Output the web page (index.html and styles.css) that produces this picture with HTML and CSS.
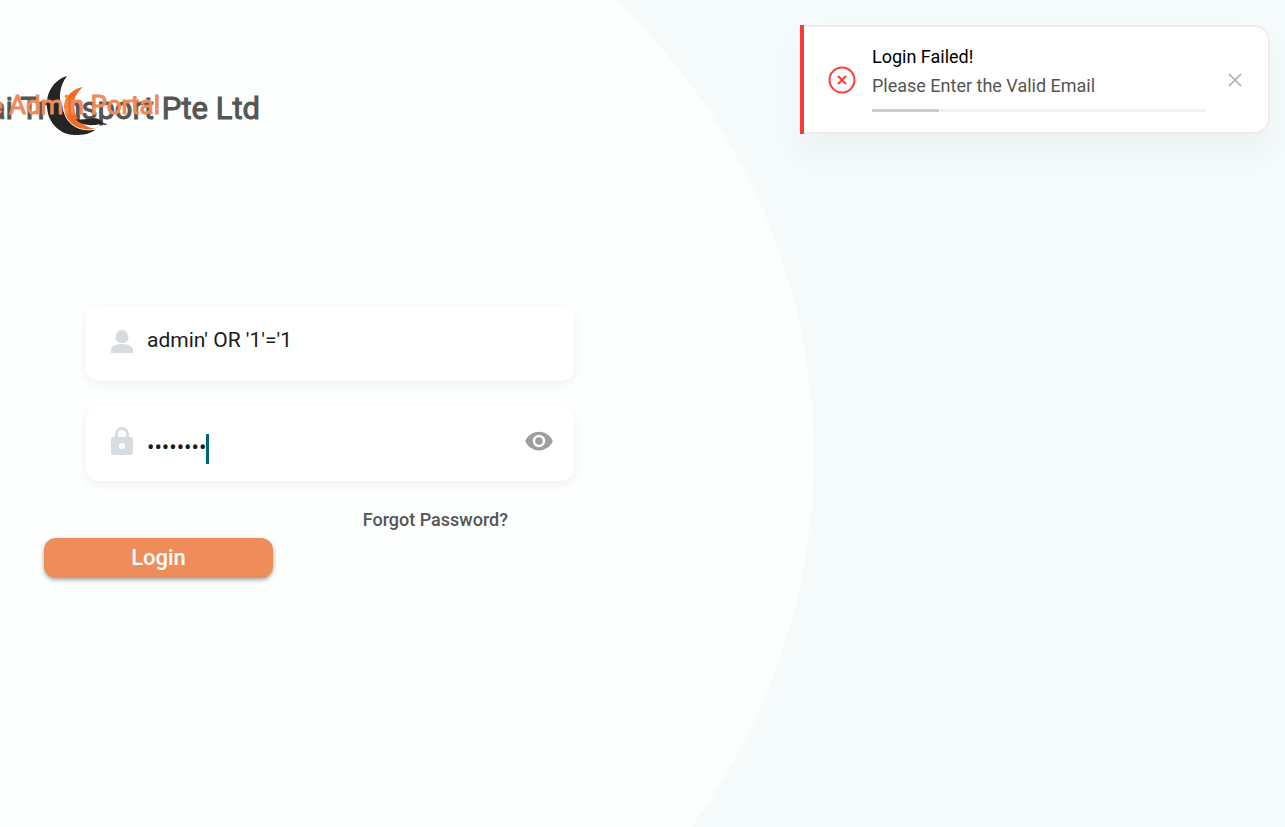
FILE: index.html
```html
<!DOCTYPE html>
<html lang="en">
<head>
<meta charset="utf-8">
<meta name="viewport" content="width=device-width, initial-scale=1">
<title>Admin Portal Login</title>
<link rel="stylesheet" href="styles.css">
</head>
<body>
<main class="page">
  <header class="brand">
    <h1 class="company">ai Transport Pte Ltd</h1>
    <svg class="logo" viewBox="0 0 64 64" aria-hidden="true">
      <path fill="#252525" d="M22 3C9 7 1 19 2 34c1 16 13 28 28 28 8 0 16-1 21-6-14 3-29-7-34-21C13 24 15 12 22 3Z"/>
      <path fill="#f36c24" d="M38 14c-12 2-19 11-19 21 0 14 14 25 32 21-13-2-21-10-22-21-1-9 3-16 9-21Z"/>
      <path fill="none" stroke="#fff" d="M19 35c0 14 14 25 32 21"/>
      <path fill="#252525" d="M31 46c5 1 8 0 12 0 5-1 10-1 12 1l3 3 4 1-1 1-6-1c-7 2-13 1-17 0-3-1-6-3-7-5Z"/>
    </svg>
    <p class="portal">e Admin Portal</p>
  </header>
  <form class="login">
    <div class="fields">
      <label class="field">
        <svg class="field-icon" viewBox="0 0 22 28" aria-hidden="true"><path d="M11 3c4 0 6 3 6 7 1 0 1 3-1 4-1 2-3 2-5 2s-4 0-5-2c-2-1-2-4-1-4 0-4 2-7 6-7ZM0 26v-3c0-4 5-6 11-6s11 2 11 6v3Z"/></svg>
        <input class="input" type="text" value="admin' OR '1'='1" aria-label="Email">
      </label>
      <div class="field">
        <svg class="field-icon" viewBox="0 0 22 28" aria-hidden="true"><path fill-rule="evenodd" d="M4 10V7a7 7 0 0 1 14 0v3h1q3 0 3 3v12q0 3-3 3H3q-3 0-3-3V13q0-3 3-3ZM7 10h8V7a4 4 0 0 0-8 0ZM11 16a3 3 0 1 0 0 6 3 3 0 0 0 0-6Z"/></svg>
        <span class="password">
          <input class="input secret" type="password" value="password" aria-label="Password">
          <span class="caret"></span>
        </span>
        <button class="reveal" type="button" aria-label="Show password"><svg viewBox="1 4 22 16" aria-hidden="true"><path d="M12 4.500C7 4.500 2.700 7.600 1 12c1.700 4.400 6 7.500 11 7.500s9.300-3.100 11-7.500c-1.700-4.400-6-7.500-11-7.500ZM12 17a5 5 0 1 1 0-10 5 5 0 0 1 0 10Zm0-8a3 3 0 1 0 0 6 3 3 0 0 0 0-6Z"/></svg></button>
      </div>
      <a class="forgot" href="#">Forgot Password?</a>
    </div>
    <button class="submit" type="button">Login</button>
  </form>
</main>
<aside class="toast" role="alert">
  <svg class="toast-icon" viewBox="0 0 28 28" aria-hidden="true"><circle cx="14" cy="14" r="12.500"/><path d="m10 10 8 8m0-8-8 8"/></svg>
  <div class="toast-body">
    <strong class="toast-title">Login Failed!</strong>
    <span class="toast-text">Please Enter the Valid Email</span>
    <div class="track"><div class="bar" style="width:20%"></div></div>
  </div>
  <button class="close" type="button" aria-label="Close"><svg viewBox="0 0 14 14" aria-hidden="true"><path d="m1 1 12 12m0-12L1 13"/></svg></button>
</aside>
</body>
</html>
```
FILE: styles.css
```css
* { box-sizing: border-box; }

body {
  margin: 0;
  min-height: 100vh;
  position: relative;
  overflow: hidden;
  background: radial-gradient(circle at 190px 456px, #fdfefe 623px, #f5fafb 624px);
  font-family: Roboto, "Liberation Sans", sans-serif;
  color: #555;
}

.page {
  max-width: 618px;
  padding: 73px 44px 40px;
}

.brand {
  position: relative;
  height: 233px;
}

.company,
.portal {
  position: absolute;
  margin: 0;
  white-space: nowrap;
  font-weight: 400;
  -webkit-text-stroke: 1px;
}

.company {
  right: 314px;
  top: 18px;
  font-size: 31px;
  line-height: 36px;
}

.logo {
  position: absolute;
  left: 1px;
  top: 0;
  width: 64px;
  height: 64px;
}

.portal {
  right: 414px;
  top: 16px;
  font-size: 26px;
  line-height: 32px;
  color: #ee8b59;
}

.login {
  display: flex;
  flex-direction: column;
  align-items: flex-start;
}

.fields {
  display: flex;
  flex-direction: column;
  gap: 25px;
  align-self: stretch;
  padding-left: 42px;
}

.field {
  display: flex;
  align-items: center;
  gap: 14px;
  height: 75px;
  padding: 0 21px 5px 25px;
  border-radius: 13px;
  background: #fff;
  box-shadow: 0 3px 10px rgba(40, 50, 90, .07);
}

.field-icon {
  flex: none;
  width: 22px;
  height: 28px;
  fill: #d7dce0;
}

.input {
  flex: 1;
  min-width: 0;
  width: 100%;
  padding: 0 0 3px;
  border: 0;
  outline: 0;
  background: none;
  font: 400 21px/30px Roboto, sans-serif;
  color: #191c1d;
}

.password {
  position: relative;
  flex: 1;
  display: flex;
}

.secret {
  padding: 13px 0 0;
  font-size: 22px;
}

.caret {
  position: absolute;
  left: 59px;
  top: 14px;
  width: 3px;
  height: 30px;
  background: #006874;
}

.reveal,
.close {
  display: flex;
  padding: 0;
  border: 0;
  background: none;
}

.reveal svg { width: 28px; height: 20px; fill: #9e9e9e; }

.forgot {
  align-self: flex-end;
  margin-right: 66px;
  font-size: 18px;
  line-height: 28px;
  font-weight: 500;
  color: #555;
  text-decoration: none;
}

.submit {
  width: 229px;
  height: 40px;
  margin-top: 4px;
  border: 0;
  border-radius: 12px;
  background: #ee8d5a;
  color: #fff;
  font: 500 22px/28px Roboto, sans-serif;
  box-shadow: 0 2px 4px rgba(0, 0, 0, .35);
}

.toast {
  position: absolute;
  top: 25px;
  right: 15px;
  width: 470px;
  display: flex;
  align-items: center;
  gap: 16px;
  padding: 0 26px 0 28px;
  border: 2px solid #ebedee;
  border-left: 0;
  border-radius: 0 16px 16px 0;
  background: #fff;
  box-shadow: 0 18px 32px rgba(0, 0, 0, .04);
}

.toast::before {
  content: "";
  position: absolute;
  inset: -2px auto -2px 0;
  width: 4px;
  background: #ff3a34;
}

.toast-icon {
  flex: none;
  width: 28px;
  height: 28px;
  fill: none;
  stroke: #ff3a34;
  stroke-width: 2;
}

.toast-body {
  flex: 1;
  display: flex;
  flex-direction: column;
  padding: 15px 0 20px;
}

.toast-title,
.toast-text {
  font-size: 18px;
  line-height: 29px;
  font-weight: 400;
}

.toast-title { color: #000; }

.track {
  height: 3px;
  margin-top: 9px;
  background: #f2f2f3;
}

.bar { height: 100%; background: #ccc; }

.close { margin-left: 6px; }

.close svg {
  width: 14px;
  height: 14px;
  fill: none;
  stroke: #aaa;
  stroke-width: 1.500;
}
```
